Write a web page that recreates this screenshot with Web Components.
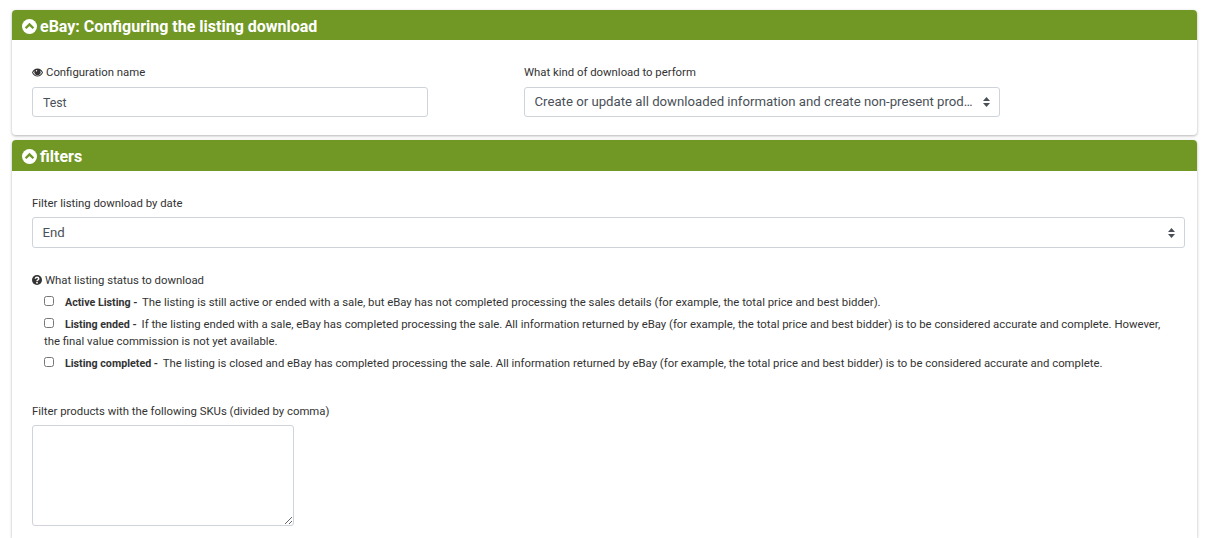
<!DOCTYPE html>
<html lang="en">

<head>
  <meta charset="UTF-8">
  <title>eBay: Configuring the listing download</title>
  <style>
    html { overflow: hidden; }
    body {
      margin: 0;
      padding: 10px 13px 0 12px;
      height: 528px;
      overflow: hidden;
      background: #fff;
      font-family: Roboto, "Liberation Sans", sans-serif;
      color: #333;
    }
  </style>
</head>

<body>
  <config-panel title="eBay: Configuring the listing download">
    <div style="display:grid;grid-template-columns:396px 476px;column-gap:96px;padding:25px 0 18px 20px">
      <form-field>
        <svg slot="icon" width="11" height="9" viewBox="0 0 22 18"><path fill="#333" fill-rule="evenodd" d="M11 1C6 1 2.300 4.200 0 9c2.300 4.800 6 8 11 8s8.700-3.200 11-8c-2.300-4.800-6-8-11-8zM11 15.400c-3.800 0-6.800-2.400-8.900-6.400c1-1.800 2.200-3.200 3.700-4.200a6.200 6.200 0 1 0 10.400 0c1.500 1 2.700 2.400 3.700 4.200c-2.100 4-5.100 6.400-8.900 6.400zM8 4.500a1.400 1.400 0 1 0 2 2a1.400 1.400 0 1 0-2-2z"/></svg>
        Configuration name
        <text-box slot="control" value="Test"></text-box>
      </form-field>
      <form-field>
        What kind of download to perform
        <select-box slot="control" value="Create or update all downloaded information and create non-present products"></select-box>
      </form-field>
    </div>
  </config-panel>

  <config-panel title="filters" tall style="margin-top:5px">
    <div style="padding:25px 12px 12px 20px">
      <form-field style="--label-gap:7px">
        Filter listing download by date
        <select-box slot="control" tall value="End"></select-box>
      </form-field>

      <form-field style="margin-top:25px;--label-gap:7px">
        <svg slot="icon" width="10" height="10" viewBox="0 0 20 20"><circle cx="10" cy="10" r="10" fill="#333"/><path fill="none" stroke="#fff" stroke-width="3" d="M6.500 7.500c.3-2 1.700-3 3.500-3s3.500 1.100 3.500 2.900c0 2.600-3.500 2.600-3.500 5"/><rect x="8.400" y="14" width="3.200" height="3" fill="#fff"/></svg>
        What listing status to download
        <div slot="control" style="padding:0 8px 0 12px">
          <status-option name="Active Listing" text="The listing is still active or ended with a sale, but eBay has not completed processing the sales details (for example, the total price and best bidder)."></status-option>
          <status-option name="Listing ended" text="If the listing ended with a sale, eBay has completed processing the sale. All information returned by eBay (for example, the total price and best bidder) is to be considered accurate and complete. However, the final value commission is not yet available."></status-option>
          <status-option name="Listing completed" text="The listing is closed and eBay has completed processing the sale. All information returned by eBay (for example, the total price and best bidder) is to be considered accurate and complete."></status-option>
        </div>
      </form-field>

      <form-field style="margin-top:32px;--label-gap:7px">
        Filter products with the following SKUs (divided by comma)
        <textarea-box slot="control"></textarea-box>
      </form-field>
    </div>
  </config-panel>

  <script>
    class ConfigPanel extends HTMLElement {
      connectedCallback() {
        this.attachShadow({ mode: 'open' });
        const tall = this.hasAttribute('tall');
        this.shadowRoot.innerHTML = `
          <style>
            :host {
              display: block;
              background: #fff;
              border-radius: ${tall ? '4px 4px 0 0' : '4px'};
              box-shadow: 0 1px 3px rgba(0, 0, 0, .3);
            }
            header {
              display: flex;
              align-items: center;
              gap: 3px;
              height: ${tall ? 31 : 30}px;
              padding: 2px 0 0 10px;
              box-sizing: border-box;
              background: #719825;
              border-radius: 4px 4px 0 0;
              color: #fff;
              font-size: 16px;
              font-weight: 700;
            }
            svg { flex: none; }
          </style>
          <header>
            <svg width="15" height="15" viewBox="0 0 20 20">
              <circle cx="10" cy="10" r="10" fill="#fff"/>
              <path fill="none" stroke="#719825" stroke-width="3.200" d="M4.800 12.300L10 7.100l5.200 5.200"/>
            </svg>
            <span>${this.getAttribute('title')}</span>
          </header>
          <slot></slot>
        `;
      }
    }
    customElements.define('config-panel', ConfigPanel);

    class FormField extends HTMLElement {
      connectedCallback() {
        this.attachShadow({ mode: 'open' });
        this.shadowRoot.innerHTML = `
          <style>
            :host { display: block; }
            label {
              display: flex;
              align-items: center;
              gap: 3px;
              height: 14px;
              margin-bottom: var(--label-gap, 8px);
              font-size: 11.350px;
              color: #333;
            }
          </style>
          <label><slot name="icon"></slot><span><slot></slot></span></label>
          <slot name="control"></slot>
        `;
      }
    }
    customElements.define('form-field', FormField);

    class TextBox extends HTMLElement {
      connectedCallback() {
        this.attachShadow({ mode: 'open' });
        this.shadowRoot.innerHTML = `
          <style>
            :host { display: block; }
            input {
              display: block;
              box-sizing: border-box;
              width: 100%;
              height: 30px;
              padding: 1px 10px 0;
              border: 1px solid #ced4da;
              border-radius: 3px;
              font: 12.300px Roboto, "Liberation Sans", sans-serif;
              color: #495057;
            }
          </style>
          <input type="text">
        `;
        this.shadowRoot.querySelector('input').value = this.getAttribute('value');
      }
    }
    customElements.define('text-box', TextBox);

    class SelectBox extends HTMLElement {
      connectedCallback() {
        this.attachShadow({ mode: 'open' });
        const tall = this.hasAttribute('tall');
        const h = tall ? 31 : 30;
        this.shadowRoot.innerHTML = `
          <style>
            :host { display: block; position: relative; }
            select {
              display: block;
              box-sizing: border-box;
              width: 100%;
              height: ${h}px;
              padding: 0 22px ${tall ? 0 : 1}px 9.500px;
              appearance: none;
              background: #fff;
              border: 1px solid #ced4da;
              border-radius: 3px;
              font: 13.200px Roboto, "Liberation Sans", sans-serif;
              color: #495057;
              text-overflow: ellipsis;
            }
            svg { position: absolute; right: 10px; top: ${(h - 10) / 2}px; }
          </style>
          <select><option></option></select>
          <svg width="7" height="10" viewBox="0 0 7 10"><path fill="#495057" d="M3.500 0L7 4H0zM3.500 10L0 6h7z"/></svg>
        `;
        this.shadowRoot.querySelector('option').textContent = this.getAttribute('value');
      }
    }
    customElements.define('select-box', SelectBox);

    class StatusOption extends HTMLElement {
      connectedCallback() {
        this.attachShadow({ mode: 'open' });
        this.shadowRoot.innerHTML = `
          <style>
            :host {
              display: block;
              margin-bottom: 5px;
              font-size: 11.350px;
              line-height: 17px;
              color: #333;
            }
            input {
              width: 10px;
              height: 10px;
              margin: 0 11px 0 0;
              vertical-align: 0;
            }
            b { font-weight: 700; font-size: 10.700px; margin-right: 2px; }
          </style>
          <input type="checkbox"><b>${this.getAttribute('name')} -</b> ${this.getAttribute('text')}
        `;
      }
    }
    customElements.define('status-option', StatusOption);

    class TextareaBox extends HTMLElement {
      connectedCallback() {
        this.attachShadow({ mode: 'open' });
        this.shadowRoot.innerHTML = `
          <style>
            :host { display: block; }
            textarea {
              display: block;
              box-sizing: border-box;
              width: 262px;
              height: 101px;
              border: 1px solid #ced4da;
              border-radius: 3px;
              background: #fff;
            }
          </style>
          <textarea></textarea>
        `;
      }
    }
    customElements.define('textarea-box', TextareaBox);
  </script>
</body>

</html>
